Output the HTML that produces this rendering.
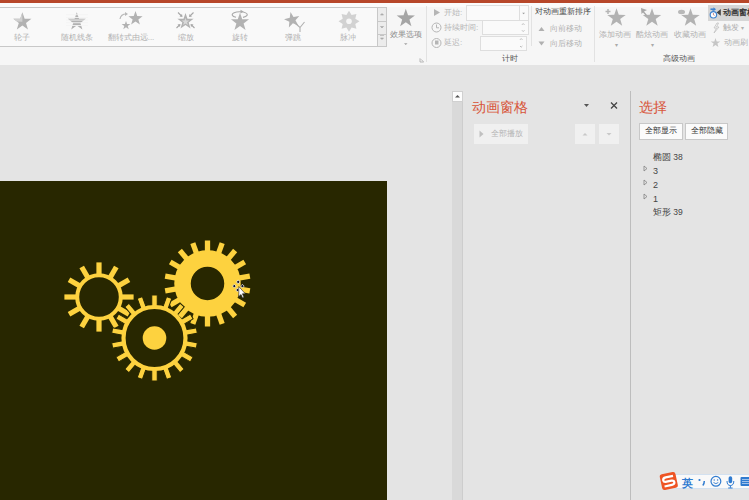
<!DOCTYPE html>
<html><head><meta charset="utf-8">
<style>
*{margin:0;padding:0;box-sizing:border-box}
html,body{width:749px;height:500px;overflow:hidden;background:#e4e4e4;font-family:"Liberation Sans",sans-serif}
.abs{position:absolute}
.lbl{position:absolute;text-align:center;font-size:8px;line-height:10px;color:#a3a3a3;white-space:nowrap}
.t{position:absolute;font-size:8px;line-height:10px;white-space:nowrap}
</style></head><body>
<div class="abs" style="left:0;top:0;width:749px;height:65px;background:#f6f6f6"></div>
<div class="abs" style="left:0;top:0;width:749px;height:3px;background:#b7472a"></div>
<div class="abs" style="left:0;top:3px;width:749px;height:4px;background:#fbfbfb"></div>
<!-- gallery -->
<div class="abs" style="left:-1px;top:7px;width:388px;height:40px;border:1px solid #c8c8c8;background:#f9f9f9"></div>
<div class="abs" style="left:377px;top:7px;width:10px;height:40px;border:1px solid #c8c8c8;background:#ececec"></div>
<div class="abs" style="left:377px;top:21px;width:10px;height:1px;background:#c8c8c8"></div>
<div class="abs" style="left:377px;top:34px;width:10px;height:1px;background:#c8c8c8"></div>
<svg style="position:absolute;left:377px;top:7px" width="10" height="40"><path d="M3.5,8 L5,6.5 L6.5,8Z M3.5,19.5 L5,21 L6.5,19.5Z M3,28.5 h4 M3.5,31 L5,32.5 L6.5,31Z" fill="#a8a8a8" stroke="#a8a8a8" stroke-width="0.6"/></svg>


<svg style="position:absolute;left:0px;top:8px" width="377" height="30" viewBox="0 8 377 30"><clipPath id="cw"><polygon points="22.40,12.30 24.63,18.73 31.44,18.86 26.01,22.97 27.98,29.49 22.40,25.60 16.82,29.49 18.79,22.97 13.36,18.86 20.17,18.73"/></clipPath><polygon points="22.40,12.30 24.63,18.73 31.44,18.86 26.01,22.97 27.98,29.49 22.40,25.60 16.82,29.49 18.79,22.97 13.36,18.86 20.17,18.73" fill="#b2b2b2" /><path d="M22.4,21.8 L22.4,11 L11,18.9 L15,21.5 Z" fill="#d0d0d0" clip-path="url(#cw)"/><polygon points="76.80,12.30 79.03,18.73 85.84,18.86 80.41,22.97 82.38,29.49 76.80,25.60 71.22,29.49 73.19,22.97 67.76,18.86 74.57,18.73" fill="#b2b2b2" /><rect x="66" y="14.3" width="22" height="0.9" fill="#f4f4f4"/><rect x="66" y="17" width="22" height="0.9" fill="#f4f4f4"/><rect x="66" y="19.6" width="22" height="0.9" fill="#f4f4f4"/><rect x="66" y="22.3" width="22" height="0.9" fill="#f4f4f4"/><rect x="66" y="25" width="22" height="0.9" fill="#f4f4f4"/><polygon points="135.50,11.00 137.26,16.07 142.63,16.18 138.35,19.43 139.91,24.57 135.50,21.50 131.09,24.57 132.65,19.43 128.37,16.18 133.74,16.07" fill="#b2b2b2" /><polygon points="126.00,20.90 127.08,24.01 130.37,24.08 127.75,26.07 128.70,29.22 126.00,27.34 123.30,29.22 124.25,26.07 121.63,24.08 124.92,24.01" fill="#b2b2b2" /><path d="M120,19 Q121,14 126,14" fill="none" stroke="#b8b8b8" stroke-width="1.2"/><path d="M125,12 L128,14 L125,16Z" fill="#b8b8b8"/><polygon points="185.50,13.00 187.50,18.75 193.58,18.87 188.73,22.55 190.50,28.38 185.50,24.90 180.50,28.38 182.27,22.55 177.42,18.87 183.50,18.75" fill="#b2b2b2" /><polygon points="185.50,17.80 186.44,20.51 189.30,20.56 187.02,22.29 187.85,25.04 185.50,23.40 183.15,25.04 183.98,22.29 181.70,20.56 184.56,20.51" fill="#d8d8d8" /><g stroke="#a8a8a8" stroke-width="1.1" fill="none"><path d="M178,12.5 L181.5,16 M193.5,12.5 L190,16 M176.5,28 L179.5,25 M194.5,28 L191.5,25"/></g><g fill="#a8a8a8"><path d="M182.5,17 L179.5,16.5 L182,14Z M189,17 L192,16.5 L189.5,14Z M180.5,24 L180,27 L177.5,24.5Z M190.5,24 L191,27 L193.5,24.5Z"/></g><polygon points="240.00,12.80 242.23,19.23 249.04,19.36 243.61,23.47 245.58,29.99 240.00,26.10 234.42,29.99 236.39,23.47 230.96,19.36 237.77,19.23" fill="#b2b2b2" /><path d="M243,11.6 A7.5,3 0 1 1 236,11.7" fill="none" stroke="#aaaaaa" stroke-width="1.1" transform="scale(1,-1) translate(0,-29)"/><path d="M240.5,9.8 L243.5,11.6 L240.5,13.4Z" fill="#aaa"/><polygon points="292.20,11.80 294.13,17.35 300.00,17.47 295.32,21.01 297.02,26.63 292.20,23.28 287.38,26.63 289.08,21.01 284.40,17.47 290.27,17.35" fill="#b2b2b2" transform="rotate(-12 292.2 20)"/><path d="M295.5,23.5 L300,27.5 L304.5,22 M300,27.5 L300,32" fill="none" stroke="#b0b0b0" stroke-width="1.1"/><polygon points="349.00,10.80 351.60,15.02 356.42,13.88 355.28,18.70 359.50,21.30 355.28,23.90 356.42,28.72 351.60,27.58 349.00,31.80 346.40,27.58 341.58,28.72 342.72,23.90 338.50,21.30 342.72,18.70 341.58,13.88 346.40,15.02" fill="#d2d2d2"/><circle cx="349" cy="21.3" r="2.8" fill="#f6f6f6"/></svg>
<div class="lbl" style="left:-17.6px;top:32.5px;width:80px;color:#b0b0b0;font-size:8px;">轮子</div><div class="lbl" style="left:36.8px;top:32.5px;width:80px;color:#b0b0b0;font-size:8px;">随机线条</div><div class="lbl" style="left:91.0px;top:32.5px;width:80px;color:#b0b0b0;font-size:8px;">翻转式由远...</div><div class="lbl" style="left:145.5px;top:32.5px;width:80px;color:#b0b0b0;font-size:8px;">缩放</div><div class="lbl" style="left:200.0px;top:32.5px;width:80px;color:#b0b0b0;font-size:8px;">旋转</div><div class="lbl" style="left:253.0px;top:32.5px;width:80px;color:#b0b0b0;font-size:8px;">弹跳</div><div class="lbl" style="left:308.0px;top:32.5px;width:80px;color:#b0b0b0;font-size:8px;">脉冲</div>
<svg style="position:absolute;left:380px;top:3px" width="369" height="60" viewBox="380 3 369 60"><polygon points="405.80,8.80 408.06,15.29 414.93,15.43 409.45,19.59 411.44,26.17 405.80,22.24 400.16,26.17 402.15,19.59 396.67,15.43 403.54,15.29" fill="#a5a5a5" /><path d="M434,9 L440,12.5 L434,16 Z" fill="#b5b5b5"/><circle cx="436.5" cy="27.5" r="4.5" fill="none" stroke="#b5b5b5" stroke-width="1"/><path d="M436.5,24.5 L436.5,27.8 L439,27.8" fill="none" stroke="#b5b5b5" stroke-width="1"/><circle cx="436.5" cy="43" r="4.5" fill="none" stroke="#b5b5b5" stroke-width="1"/><rect x="435" y="40.5" width="3.5" height="4" fill="#b5b5b5"/><path d="M538.5,31 L541.5,27 L544.5,31 Z" fill="#b0b0b0"/><path d="M538.5,41.5 L541.5,45.5 L544.5,41.5 Z" fill="#b0b0b0"/><polygon points="616.50,8.20 618.78,14.76 625.73,14.90 620.19,19.10 622.20,25.75 616.50,21.78 610.80,25.75 612.81,19.10 607.27,14.90 614.22,14.76" fill="#b2b2b2" /><path d="M605.5,11.5 h5 M608,9 v5" stroke="#b5b5b5" stroke-width="1.5"/><polygon points="652.00,8.20 654.28,14.76 661.23,14.90 655.69,19.10 657.70,25.75 652.00,21.78 646.30,25.75 648.31,19.10 642.77,14.90 649.72,14.76" fill="#b2b2b2" /><path d="M641,8 L647,10 L644,11.5 L647,15 L646,16 L643,12.5 L641.5,14 Z" fill="#a8a8a8"/><polygon points="690.50,8.20 692.78,14.76 699.73,14.90 694.19,19.10 696.20,25.75 690.50,21.78 684.80,25.75 686.81,19.10 681.27,14.90 688.22,14.76" fill="#b2b2b2" /><ellipse cx="681.5" cy="12" rx="3.5" ry="2.2" fill="#b8b8b8"/><path d="M717,23 L714,28 L716.5,28 L714,33 L719,27 L716.5,27 L718.5,23 Z" fill="none" stroke="#c0c0c0" stroke-width="0.8"/><polygon points="715.50,38.00 716.68,41.38 720.26,41.45 717.40,43.62 718.44,47.05 715.50,45.00 712.56,47.05 713.60,43.62 710.74,41.45 714.32,41.38" fill="#c5c5c5" /><path d="M420,58.3 L420,62 L423.7,62" fill="none" stroke="#a8a8a8" stroke-width="0.8"/><path d="M421,59.3 L423.5,61.8" stroke="#a8a8a8" stroke-width="0.8"/><path d="M404,43.2 L407.5,43.2 L405.75,45Z" fill="#a0a0a0"/></svg>
<div class="lbl" style="left:375.8px;top:30px;width:60px;color:#8c8c8c;font-size:8px;">效果选项</div>

<div class="abs" style="left:426px;top:6px;width:1px;height:56px;background:#e2e2e2"></div>
<!-- timing -->
<div class="t" style="left:444px;top:8px;color:#b5b5b5">开始:</div>
<div class="t" style="left:444px;top:23px;color:#b5b5b5">持续时间:</div>
<div class="t" style="left:444px;top:38px;color:#b5b5b5">延迟:</div>
<div class="abs" style="left:466px;top:5px;width:63px;height:16px;border:1px solid #dedede;background:#fafafa"></div>
<div class="abs" style="left:519px;top:5px;width:10px;height:16px;border:1px solid #dedede;background:#fafafa"></div>
<div class="abs" style="left:482px;top:20px;width:47px;height:15px;border:1px solid #dedede;background:#fafafa"></div>
<div class="abs" style="left:480px;top:36px;width:47px;height:15px;border:1px solid #dedede;background:#fafafa"></div>





<div class="lbl" style="left:490.3px;top:54px;width:40px;color:#555;font-size:8px;">计时</div>
<svg style="position:absolute;left:515px;top:5px" width="15" height="46"><path d="M7.2,7.8 L10,7.8 L8.6,9.2Z" fill="#999"/><path d="M7,19.8 L8.2,18.6 L9.4,19.8 M7,25.3 L8.2,26.5 L9.4,25.3 M5,34.8 L6.2,33.6 L7.4,34.8 M5,41 L6.2,42.2 L7.4,41" fill="none" stroke="#aaa" stroke-width="0.8"/></svg>
<div class="abs" style="left:531px;top:6px;width:1px;height:40px;background:#e2e2e2"></div>
<div class="t" style="left:535px;top:7px;color:#444">对动画重新排序</div>
<div class="t" style="left:550px;top:24px;color:#b0b0b0">向前移动</div>
<div class="t" style="left:550px;top:39px;color:#b0b0b0">向后移动</div>
<div class="abs" style="left:594px;top:6px;width:1px;height:56px;background:#e2e2e2"></div>
<!-- advanced -->
<div class="lbl" style="left:589.8px;top:30px;width:50px;color:#b0b0b0;font-size:8px;">添加动画</div>
<div class="lbl" style="left:627.3px;top:30px;width:50px;color:#b0b0b0;font-size:8px;">酷炫动画</div>
<div class="lbl" style="left:665.0px;top:30px;width:50px;color:#b0b0b0;font-size:8px;">收藏动画</div>
<div class="lbl" style="left:606.5px;top:40px;width:20px;color:#aaa;font-size:6px;">▾</div>
<div class="lbl" style="left:642.0px;top:40px;width:20px;color:#aaa;font-size:6px;">▾</div>
<div class="lbl" style="left:648.7px;top:54px;width:60px;color:#555;font-size:8px;">高级动画</div>
<div class="abs" style="left:708px;top:5px;width:41px;height:15.5px;background:#d6d6d6"></div>
<svg style="position:absolute;left:700px;top:3px" width="49" height="50" viewBox="700 3 49 50"><circle cx="713.4" cy="14.8" r="3.2" fill="#fff" stroke="#3f83d0" stroke-width="1.2"/><path d="M713.4,14.8 L713.4,13 M713.4,14.8 L714.6,15.4" stroke="#a04040" stroke-width="0.6"/><path d="M710.5,9.2 h3.5" stroke="#3f83d0" stroke-width="1.6"/><path d="M713.5,7.2 L716,9.2 L713.5,11.2Z" fill="#3f83d0"/><path d="M713,9.2 v2.4" stroke="#3f83d0" stroke-width="1"/><path d="M720.8,9 L716.6,12.4 L720.8,15.8 Z" fill="#444"/></svg>
<div class="t" style="left:723px;top:8px;color:#333;font-weight:bold">动画窗格</div>
<div class="t" style="left:723px;top:23px;color:#b0b0b0">触发 <span style="font-size:6px">▾</span></div>
<div class="t" style="left:724px;top:38px;color:#b0b0b0">动画刷</div>
<!-- slide -->
<svg width="387" height="319" viewBox="0 181 387 319" style="position:absolute;left:0;top:181px">
<rect x="0" y="181" width="387" height="319" fill="#282700"/>
<g fill="#fdd23f">
<rect x="96.40" y="262.40" width="5.2" height="13.60" transform="rotate(0.00 99 297)"/><rect x="96.40" y="262.40" width="5.2" height="13.60" transform="rotate(30.00 99 297)"/><rect x="96.40" y="262.40" width="5.2" height="13.60" transform="rotate(60.00 99 297)"/><rect x="96.40" y="262.40" width="5.2" height="13.60" transform="rotate(90.00 99 297)"/><rect x="96.40" y="262.40" width="5.2" height="13.60" transform="rotate(120.00 99 297)"/><rect x="96.40" y="262.40" width="5.2" height="13.60" transform="rotate(150.00 99 297)"/><rect x="96.40" y="262.40" width="5.2" height="13.60" transform="rotate(180.00 99 297)"/><rect x="96.40" y="262.40" width="5.2" height="13.60" transform="rotate(210.00 99 297)"/><rect x="96.40" y="262.40" width="5.2" height="13.60" transform="rotate(240.00 99 297)"/><rect x="96.40" y="262.40" width="5.2" height="13.60" transform="rotate(270.00 99 297)"/><rect x="96.40" y="262.40" width="5.2" height="13.60" transform="rotate(300.00 99 297)"/><rect x="96.40" y="262.40" width="5.2" height="13.60" transform="rotate(330.00 99 297)"/>
<circle cx="99" cy="297" r="21.8" fill="none" stroke="#fdd23f" stroke-width="4"/>
<rect x="204.85" y="240.50" width="5.3" height="13.00" transform="rotate(0.00 207.5 283.5)"/><rect x="204.85" y="240.50" width="5.3" height="13.00" transform="rotate(20.00 207.5 283.5)"/><rect x="204.85" y="240.50" width="5.3" height="13.00" transform="rotate(40.00 207.5 283.5)"/><rect x="204.85" y="240.50" width="5.3" height="13.00" transform="rotate(60.00 207.5 283.5)"/><rect x="204.85" y="240.50" width="5.3" height="13.00" transform="rotate(80.00 207.5 283.5)"/><rect x="204.85" y="240.50" width="5.3" height="13.00" transform="rotate(100.00 207.5 283.5)"/><rect x="204.85" y="240.50" width="5.3" height="13.00" transform="rotate(120.00 207.5 283.5)"/><rect x="204.85" y="240.50" width="5.3" height="13.00" transform="rotate(140.00 207.5 283.5)"/><rect x="204.85" y="240.50" width="5.3" height="13.00" transform="rotate(160.00 207.5 283.5)"/><rect x="204.85" y="240.50" width="5.3" height="13.00" transform="rotate(180.00 207.5 283.5)"/><rect x="204.85" y="240.50" width="5.3" height="13.00" transform="rotate(200.00 207.5 283.5)"/><rect x="204.85" y="240.50" width="5.3" height="13.00" transform="rotate(220.00 207.5 283.5)"/><rect x="204.85" y="240.50" width="5.3" height="13.00" transform="rotate(240.00 207.5 283.5)"/><rect x="204.85" y="240.50" width="5.3" height="13.00" transform="rotate(260.00 207.5 283.5)"/><rect x="204.85" y="240.50" width="5.3" height="13.00" transform="rotate(280.00 207.5 283.5)"/><rect x="204.85" y="240.50" width="5.3" height="13.00" transform="rotate(300.00 207.5 283.5)"/><rect x="204.85" y="240.50" width="5.3" height="13.00" transform="rotate(320.00 207.5 283.5)"/><rect x="204.85" y="240.50" width="5.3" height="13.00" transform="rotate(340.00 207.5 283.5)"/>
<circle cx="207.5" cy="283.5" r="25" fill="none" stroke="#fdd23f" stroke-width="16.5"/>
<rect x="151.75" y="295.00" width="5.5" height="13.00" transform="rotate(0.00 154.5 338)" stroke="#282700" stroke-width="1"/><rect x="151.75" y="295.00" width="5.5" height="13.00" transform="rotate(20.00 154.5 338)" stroke="#282700" stroke-width="1"/><rect x="151.75" y="295.00" width="5.5" height="13.00" transform="rotate(40.00 154.5 338)" stroke="#282700" stroke-width="1"/><rect x="151.75" y="295.00" width="5.5" height="13.00" transform="rotate(60.00 154.5 338)" stroke="#282700" stroke-width="1"/><rect x="151.75" y="295.00" width="5.5" height="13.00" transform="rotate(80.00 154.5 338)" stroke="#282700" stroke-width="1"/><rect x="151.75" y="295.00" width="5.5" height="13.00" transform="rotate(100.00 154.5 338)" stroke="#282700" stroke-width="1"/><rect x="151.75" y="295.00" width="5.5" height="13.00" transform="rotate(120.00 154.5 338)" stroke="#282700" stroke-width="1"/><rect x="151.75" y="295.00" width="5.5" height="13.00" transform="rotate(140.00 154.5 338)" stroke="#282700" stroke-width="1"/><rect x="151.75" y="295.00" width="5.5" height="13.00" transform="rotate(160.00 154.5 338)" stroke="#282700" stroke-width="1"/><rect x="151.75" y="295.00" width="5.5" height="13.00" transform="rotate(180.00 154.5 338)" stroke="#282700" stroke-width="1"/><rect x="151.75" y="295.00" width="5.5" height="13.00" transform="rotate(200.00 154.5 338)" stroke="#282700" stroke-width="1"/><rect x="151.75" y="295.00" width="5.5" height="13.00" transform="rotate(220.00 154.5 338)" stroke="#282700" stroke-width="1"/><rect x="151.75" y="295.00" width="5.5" height="13.00" transform="rotate(240.00 154.5 338)" stroke="#282700" stroke-width="1"/><rect x="151.75" y="295.00" width="5.5" height="13.00" transform="rotate(260.00 154.5 338)" stroke="#282700" stroke-width="1"/><rect x="151.75" y="295.00" width="5.5" height="13.00" transform="rotate(280.00 154.5 338)" stroke="#282700" stroke-width="1"/><rect x="151.75" y="295.00" width="5.5" height="13.00" transform="rotate(300.00 154.5 338)" stroke="#282700" stroke-width="1"/><rect x="151.75" y="295.00" width="5.5" height="13.00" transform="rotate(320.00 154.5 338)" stroke="#282700" stroke-width="1"/><rect x="151.75" y="295.00" width="5.5" height="13.00" transform="rotate(340.00 154.5 338)" stroke="#282700" stroke-width="1"/>
<circle cx="154.5" cy="338" r="31" fill="none" stroke="#fdd23f" stroke-width="4.2"/>
<circle cx="154.5" cy="338" r="11.8"/>
</g>
<g fill="#1a1a2a" stroke="#fff" stroke-width="0.7">
<path d="M238.2,279.9 L240,281.9 L238.2,283.9 L236.4,281.9Z"/>
<path d="M234.3,284.3 L236.1,286.1 L234.3,287.9 L232.5,286.1Z"/>
<path d="M242.4,284.3 L244.2,286.1 L242.4,287.9 L240.6,286.1Z"/>
<path d="M237.6,288.2 L239.4,290 L237.6,291.8 L235.8,290Z"/>
</g>
<path d="M238.8,286.5 L238.8,296.5 L241,294.5 L242.6,298 L244,297.3 L242.4,293.8 L245.3,293.8 Z" fill="#fff" stroke="#222" stroke-width="0.6"/>
</svg>
<!-- scrollbar -->
<div class="abs" style="left:452px;top:91px;width:11px;height:409px;background:#d9d9d9;border-right:1px solid #cdcdcd"></div>
<div class="abs" style="left:452px;top:91px;width:11px;height:11px;background:#fdfdfd;border:1px solid #d0d0d0"></div>
<svg style="position:absolute;left:452px;top:91px" width="11" height="11"><path d="M3,6.5 L5.5,4 L8,6.5Z" fill="#555"/></svg>
<!-- animation pane -->
<div class="t" style="left:472px;top:99px;font-size:14px;line-height:16px;color:#d8553a">动画窗格</div>
<svg style="position:absolute;left:580px;top:100px" width="50" height="12"><path d="M4,4 L9,4 L6.5,7 Z" fill="#555"/><path d="M31,2.5 L37,8.5 M37,2.5 L31,8.5" stroke="#444" stroke-width="1.3"/></svg>
<div class="abs" style="left:474px;top:124px;width:54px;height:20px;background:#f0f0f0"></div>
<svg style="position:absolute;left:474px;top:124px" width="54" height="20"><path d="M5.5,6.5 L9.5,10 L5.5,13.5 Z" fill="#c0c0c0"/></svg>
<div class="t" style="left:491px;top:129px;color:#b5b5b5">全部播放</div>
<div class="abs" style="left:575px;top:124px;width:20px;height:20px;background:#f0f0f0"></div>
<div class="abs" style="left:599px;top:124px;width:20px;height:20px;background:#f0f0f0"></div>
<svg style="position:absolute;left:575px;top:124px" width="44" height="20"><path d="M7.5,11.5 L10,9 L12.5,11.5Z" fill="#c8c8c8"/><path d="M31.5,9 L34,11.5 L36.5,9Z" fill="#c8c8c8"/></svg>
<div class="abs" style="left:630px;top:91px;width:1px;height:409px;background:#bdbdbd"></div>
<!-- selection pane -->
<div class="t" style="left:639px;top:99px;font-size:14px;line-height:16px;color:#d8553a">选择</div>
<div class="abs" style="left:639px;top:123px;width:44px;height:17px;border:1px solid #c8c8c8;background:#fbfbfb"></div>
<div class="abs" style="left:685px;top:123px;width:43px;height:17px;border:1px solid #c8c8c8;background:#fbfbfb"></div>
<div class="t" style="left:645px;top:126px;color:#333">全部显示</div>
<div class="t" style="left:691px;top:126px;color:#333">全部隐藏</div>
<div class="t" style="left:653px;top:152px;color:#444;font-size:8.5px">椭圆 38</div>
<svg style="position:absolute;left:642px;top:164px" width="8" height="40"><path d="M2,2 L5,4.5 L2,7Z M2,16 L5,18.5 L2,21Z M2,30 L5,32.5 L2,35Z" fill="none" stroke="#777" stroke-width="0.7"/></svg>
<div class="t" style="left:653px;top:166px;color:#444;font-size:9px">3</div>
<div class="t" style="left:653px;top:180px;color:#444;font-size:9px">2</div>
<div class="t" style="left:653px;top:194px;color:#444;font-size:9px">1</div>
<div class="t" style="left:653px;top:207px;color:#444;font-size:8.5px">矩形 39</div>
<!-- IME -->
<div class="abs" style="left:674px;top:474px;width:76px;height:15px;background:#f9f9f9;border:1px solid #d3e1f0"></div>
<svg style="position:absolute;left:655px;top:465px" width="94" height="30" viewBox="655 465 94 30">
<g transform="rotate(-12 668.8 481)"><rect x="660.8" y="473" width="16" height="16" rx="2.5" fill="#ee5424"/>
<path d="M674,476.8 L666.5,476.8 Q663.5,476.8 663.5,479.3 Q663.5,481.2 666.5,481.2 L671.5,481.2 Q674,481.2 674,483.2 Q674,485.5 671,485.5 L663.5,485.5" fill="none" stroke="#fff" stroke-width="2.2"/></g>
<text x="682" y="486.5" font-size="10.5" font-weight="bold" fill="#2f7bd0" font-family="Liberation Sans, sans-serif">英</text>
<circle cx="699.5" cy="480" r="1.1" fill="#2f7bd0"/><path d="M704.3,481 Q704.3,484 702.8,485.5" fill="none" stroke="#2f7bd0" stroke-width="1.5"/>
<circle cx="715.9" cy="481.3" r="4.9" fill="none" stroke="#2f7bd0" stroke-width="1.2"/><circle cx="714.2" cy="480" r="0.7" fill="#2f7bd0"/><circle cx="717.6" cy="480" r="0.7" fill="#2f7bd0"/><path d="M713.5,482.5 Q715.9,484.8 718.3,482.5" fill="none" stroke="#2f7bd0" stroke-width="0.9"/>
<rect x="728.6" y="476.2" width="3.6" height="7" rx="1.8" fill="#2f7bd0"/><path d="M727,481 Q727,485.5 730.4,485.5 Q733.8,485.5 733.8,481 M730.4,485.5 v2.3 M728.2,488 h4.4" fill="none" stroke="#2f7bd0" stroke-width="1"/>
<rect x="740.5" y="477" width="10" height="9" rx="1" fill="#2f7bd0"/><path d="M742,479.5 h8 M742,481.5 h8 M742,483.5 h8" stroke="#cfe0f5" stroke-width="0.7"/>
</svg>
</body></html>
